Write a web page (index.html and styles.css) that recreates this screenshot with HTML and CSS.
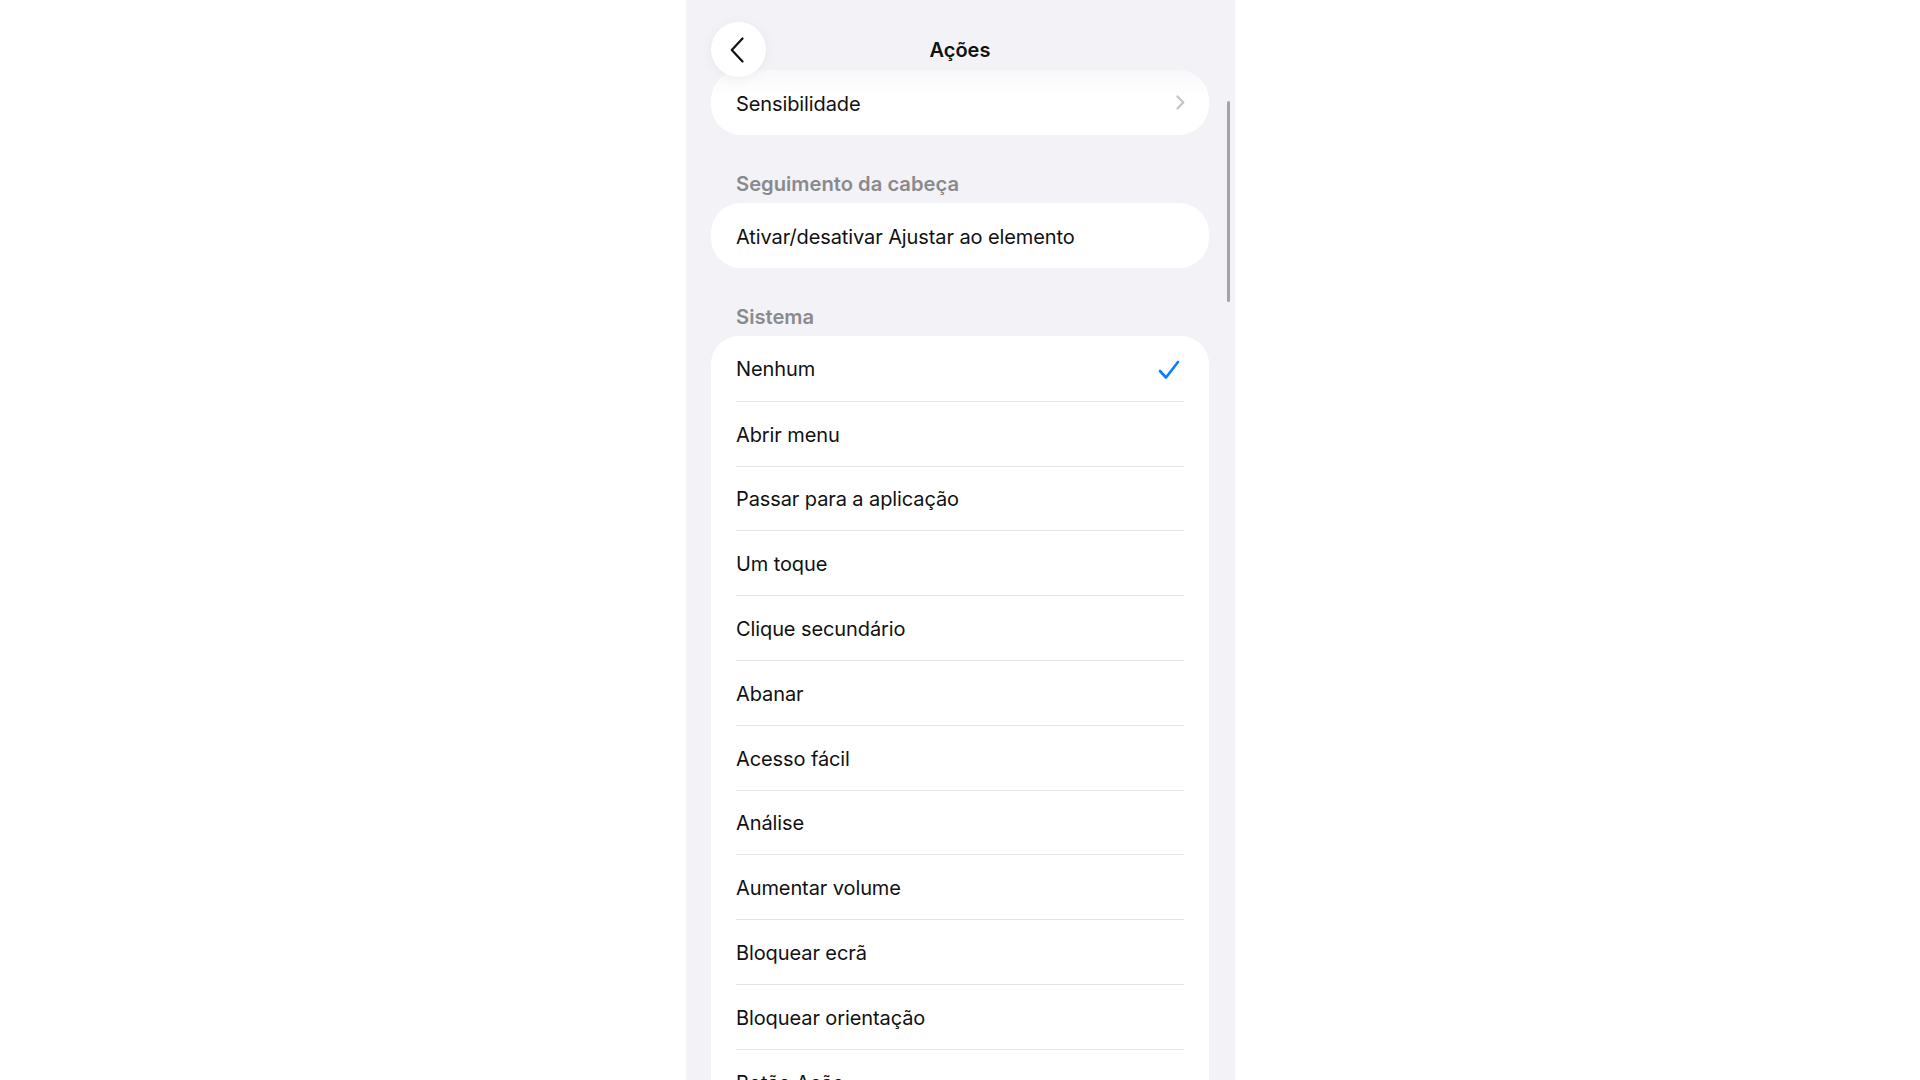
FILE: index.html
```html
<!DOCTYPE html>
<html lang="pt">
  <head>
    <meta charset="UTF-8" />
    <meta name="viewport" content="width=device-width, initial-scale=1.0" />
    <title>Ações</title>
    <link rel="stylesheet" href="styles.css">
  </head>
  <body>
    <section class="phone">
      <header class="nav">
        <a class="back" href="javascript:;">
          <svg width="14" height="26" viewBox="0 0 14 26">
            <path d="M12.5 1.5 L1.8 13 L12.5 24.5" fill="none" stroke="#111" stroke-width="2.2" stroke-linecap="round" stroke-linejoin="round" />
          </svg>
        </a>
        <h1 class="title">Ações</h1>
        <span></span>
      </header>
      <div class="scroll-bar"></div>

      <main class="content">
        <ul class="group">
          <li class="row">
            <span>Sensibilidade</span>
            <svg class="chevron" width="9" height="15" viewBox="0 0 9 15">
              <path d="M1.5 1.5 L7.3 7.5 L1.5 13.5" fill="none" stroke="#c4c4c8" stroke-width="2.2" stroke-linecap="round" stroke-linejoin="round" />
            </svg>
          </li>
        </ul>

        <h2 class="group-title">Seguimento da cabeça</h2>
        <ul class="group">
          <li class="row">Ativar/desativar Ajustar ao elemento</li>
        </ul>

        <h2 class="group-title">Sistema</h2>
        <ul class="group list">
          <li class="row">
            <span>Nenhum</span>
            <svg class="check" width="22" height="20" viewBox="0 0 22 20">
              <path d="M2 11 L8 17.5 L20 2" fill="none" stroke="#0a7cff" stroke-width="2.6" stroke-linecap="round" stroke-linejoin="round" />
            </svg>
          </li>
          <li class="row">Abrir menu</li>
          <li class="row">Passar para a aplicação</li>
          <li class="row">Um toque</li>
          <li class="row">Clique secundário</li>
          <li class="row">Abanar</li>
          <li class="row">Acesso fácil</li>
          <li class="row">Análise</li>
          <li class="row">Aumentar volume</li>
          <li class="row">Bloquear ecrã</li>
          <li class="row">Bloquear orientação</li>
          <li class="row">Botão Ação</li>
        </ul>
      </main>
    </section>
  </body>
</html>
```

FILE: styles.css
```css
* {
  margin: 0;
  padding: 0;
  box-sizing: border-box;
}
html,
body {
  height: 100%;
}
body {
  background-color: #fff;
  font-family: "Inter", "Noto Sans", sans-serif;
  color: #111;
  overflow: hidden;
}
a {
  text-decoration: none;
}
li {
  list-style-type: none;
}
.phone {
  position: relative;
  width: 549px;
  height: 100%;
  margin: 0 auto;
  background-color: #f2f2f7;
  overflow: hidden;
}
/* barra de navegação por cima do conteúdo */
.nav {
  position: absolute;
  top: 0;
  left: 0;
  right: 0;
  height: 96px;
  padding: 22px 25.5px 0;
  display: grid;
  grid-template-columns: 55px 1fr 55px;
  align-items: start;
  z-index: 5;
  background: linear-gradient(
    to bottom,
    rgba(242, 242, 247, 0.97) 0%,
    rgba(242, 242, 247, 0.85) 55%,
    rgba(242, 242, 247, 0) 100%
  );
}
.back {
  width: 55px;
  height: 55px;
  border-radius: 50%;
  background-color: #fff;
  display: flex;
  align-items: center;
  justify-content: center;
  padding-right: 3px;
  box-shadow: 0 2px 12px rgba(0, 0, 0, 0.05);
}
.title {
  text-align: center;
  font-size: 20px;
  font-weight: 600;
  line-height: 57px;
  color: #111;
}
.scroll-bar {
  position: absolute;
  top: 101px;
  right: 4.5px;
  width: 3.5px;
  height: 201px;
  border-radius: 2px;
  background-color: #a3a3a8;
  z-index: 6;
}
.content {
  padding: 70px 25.5px 0;
}
.group {
  background-color: #fff;
  border-radius: 30px;
  padding: 0 25px 0 25px;
}
.row {
  height: 65px;
  padding-top: 2px;
  display: flex;
  align-items: center;
  justify-content: space-between;
  font-size: 20px;
  letter-spacing: -0.1px;
  color: #111;
}
.list {
  border-radius: 28px;
}
.list .row {
  height: 64.8px;
}
.list .row + .row {
  border-top: 1px solid #e4e4e8;
}
.chevron {
  margin-right: -1px;
  margin-top: -2px;
}
.check {
  margin-right: 4px;
  margin-top: 1px;
}
.group-title {
  margin: 37px 0 7px 25px;
  font-size: 20.2px;
  line-height: 24px;
  font-weight: 600;
  color: #8a8a8e;
}
```
